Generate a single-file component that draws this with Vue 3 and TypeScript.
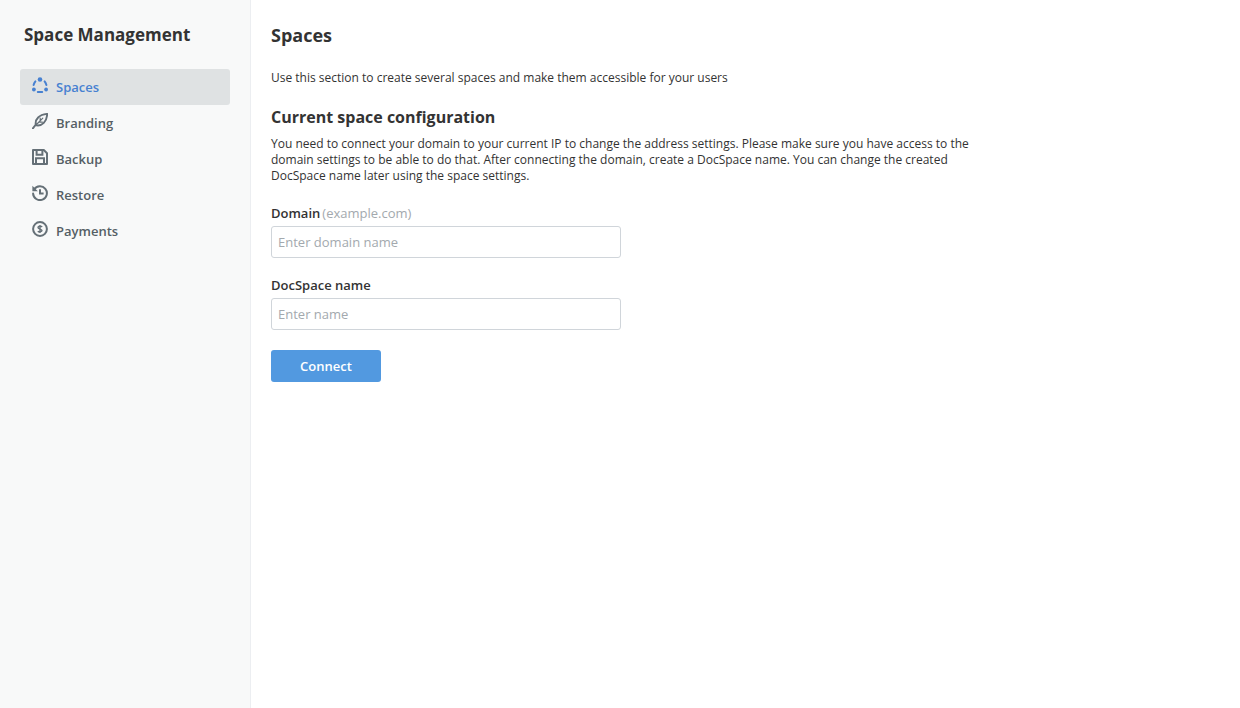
<script setup lang="ts">
interface NavItem {
  label: string
  icon: string
}

const navItems: NavItem[] = [
  { label: 'Spaces', icon: 'spaces' },
  { label: 'Branding', icon: 'branding' },
  { label: 'Backup', icon: 'backup' },
  { label: 'Restore', icon: 'restore' },
  { label: 'Payments', icon: 'payments' },
]
</script>

<template>
  <div class="layout">
    <aside class="sidebar">
      <div class="sidebar-title">Space Management</div>
      <nav class="nav">
        <div
          v-for="(item, index) in navItems"
          :key="item.label"
          class="nav-item"
          :class="{ active: index === 0 }"
        >
          <svg class="nav-icon" width="16" height="16" viewBox="0 0 16 16">
            <template v-if="item.icon === 'spaces'">
              <circle cx="8" cy="2.5" r="2.3" fill="currentColor" />
              <circle cx="1.9" cy="12.5" r="1.9" fill="currentColor" />
              <circle cx="14.1" cy="12.5" r="1.9" fill="currentColor" />
              <path d="M3.4 4.4Q2.2 5.8 1.6 8M12.6 4.4Q13.8 5.8 14.4 8M5.8 15H10.2" fill="none" stroke="currentColor" stroke-width="2" stroke-linecap="round" />
            </template>
            <template v-else-if="item.icon === 'branding'">
              <path d="M0.9 15.4 4.2 11M3.8 11.8C2.8 6.2 7.2 1.6 15.2 0.9 14.8 8.8 10 13.2 4.6 12.4Z" fill="none" stroke="currentColor" stroke-width="1.9" stroke-linecap="round" stroke-linejoin="round" />
              <path d="M5 11 10.8 5.2M6.6 9.2H10.4M8.2 7.6V5" fill="none" stroke="currentColor" stroke-width="1.2" stroke-linecap="round" />
            </template>
            <template v-else-if="item.icon === 'backup'">
              <path d="M1 1H11.8L15 4.2V15H1Z" fill="none" stroke="currentColor" stroke-width="2" stroke-linejoin="round" />
              <path d="M4.6 1V5.8H10.4V1M4 15V9.2H12V15" fill="none" stroke="currentColor" stroke-width="2" />
            </template>
            <template v-else-if="item.icon === 'restore'">
              <path d="M2.2 4.4A6.9 6.9 0 1 1 1.1 8.6" fill="none" stroke="currentColor" stroke-width="2" stroke-linecap="round" />
              <path d="M0.4 0.8V6.2H5.8Z" fill="currentColor" />
              <path d="M8 4.2V8.6H11.6" fill="none" stroke="currentColor" stroke-width="2" />
            </template>
            <template v-else>
              <circle cx="8" cy="8" r="6.9" fill="none" stroke="currentColor" stroke-width="2" />
              <path d="M10.2 5.9C9.4 5 6 4.9 6 6.6S10 8 10 9.6 6.6 11.1 5.8 10.2M8 3.9V12.1" fill="none" stroke="currentColor" stroke-width="1.4" />
            </template>
          </svg>
          <span>{{ item.label }}</span>
        </div>
      </nav>
    </aside>

    <main class="content">
      <h1 class="page-title">Spaces</h1>
      <p class="intro">Use this section to create several spaces and make them accessible for your users</p>
      <h2 class="section-title">Current space configuration</h2>
      <p class="description">
        You need to connect your domain to your current IP to change the address settings. Please make sure you have access to the
        domain settings to be able to do that. After connecting the domain, create a DocSpace name. You can change the created
        DocSpace name later using the space settings.
      </p>

      <div class="form-group first">
        <label>Domain<span class="hint">(example.com)</span></label>
        <input type="text" placeholder="Enter domain name" />
      </div>
      <div class="form-group">
        <label>DocSpace name</label>
        <input type="text" placeholder="Enter name" />
      </div>
      <button class="btn-connect">Connect</button>
    </main>
  </div>
</template>

<style>
html, body { background: #fff; }
</style>

<style scoped>
.layout {
  display: flex; height: 708px; overflow: hidden;
  font-family: "Open Sans", sans-serif; color: #333;
}

.sidebar {
  width: 250px; flex-shrink: 0; box-sizing: content-box;
  background: #f8f9f9; border-right: 1px solid #eceef1;
  padding-top: 24px;
}
.sidebar-title {
  font-size: 17px; font-weight: 700; line-height: 22px; color: #333;
  padding-left: 24px; margin-bottom: 23px;
}
.nav { display: flex; flex-direction: column; margin: 0 20px; }
.nav-item {
  display: flex; align-items: center; gap: 8px;
  height: 36px; padding-left: 12px; border-radius: 3px;
  font-size: 13px; font-weight: 600; color: #555f65;
}
.nav-item.active { background: #dfe2e3; color: #4781d1; }
.nav-icon { flex-shrink: 0; margin-top: -5px; color: #657077; }
.nav-item.active .nav-icon { color: #4781d1; }

.content { flex: 1; padding: 24px 0 0 20px; }
.page-title {
  font-size: 18px; font-weight: 700; line-height: 22px; margin: 0 0 22px;
}
.intro { font-size: 12px; line-height: 20px; margin: 0 0 18px; }
.section-title {
  font-size: 16px; font-weight: 700; line-height: 22px; margin: 0 0 8px;
}
.description {
  font-size: 12px; line-height: 16px; margin: 0; width: 710px;
}
.form-group { display: flex; flex-direction: column; margin-bottom: 17px; }
.form-group.first { margin-top: 19px; }
.form-group label {
  font-size: 13px; font-weight: 600; line-height: 20px; margin-bottom: 3px;
}
.hint { font-weight: 400; color: #a3a9ae; margin-left: 2px; }
.form-group input {
  box-sizing: border-box; width: 350px; height: 32px; padding: 0 6px;
  border: 1px solid #d0d5da; border-radius: 3px; outline: none;
  font-family: inherit; font-size: 13px; color: #333; background: #fff;
}
.form-group input::placeholder { color: #a3a9ae; opacity: 1; }
.btn-connect {
  display: block; width: 110px; height: 32px; margin-top: 20px; border: none; border-radius: 3px;
  background: #5299e0; color: #fff; cursor: pointer;
  font-family: inherit; font-size: 13px; font-weight: 600;
}
</style>
